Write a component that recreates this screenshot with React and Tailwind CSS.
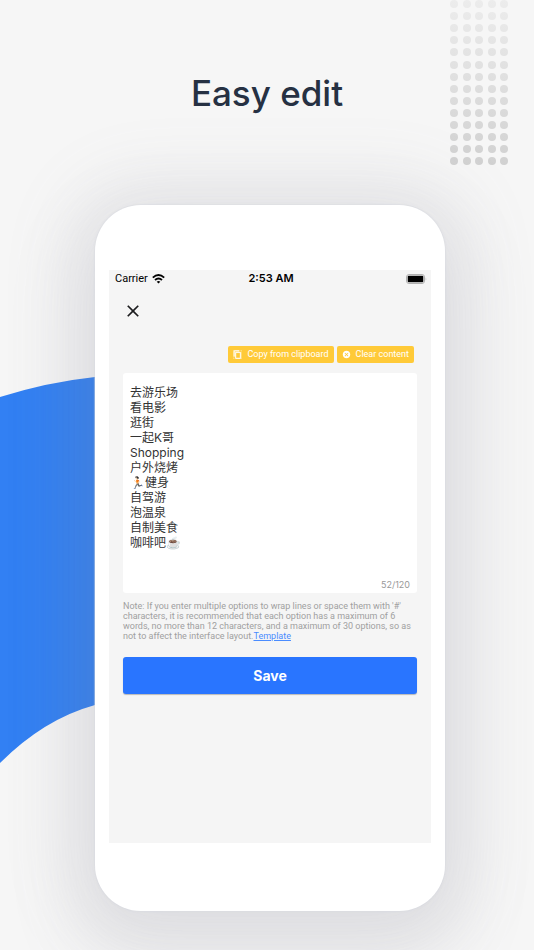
import { useState } from "react";
import { MdCancel, MdClose, MdContentCopy } from "react-icons/md";

const MAX_LENGTH = 120;

const initialOptions = [
  "去游乐场",
  "看电影",
  "逛街",
  "一起K哥",
  "Shopping",
  "户外烧烤",
  "🏃🏻健身",
  "自驾游",
  "泡温泉",
  "自制美食",
  "咖啡吧☕️",
].join("\n");

const dotColumns = [4, 17, 29, 42, 54];
const dotRows = [4, 16, 28, 40, 52, 65, 77, 89, 101, 113, 125, 137, 149, 161];

// counts an emoji with its modifiers as one character
const segmenter = new Intl.Segmenter();
const countCharacters = (text) => [...segmenter.segment(text)].length;

function DotGrid() {
  return (
    <svg className="absolute top-0 right-[26px] h-[166px] w-[58px]" viewBox="0 0 58 166" aria-hidden="true">
      <defs>
        <linearGradient id="dots" gradientUnits="userSpaceOnUse" x1="0" y1="0" x2="0" y2="166">
          <stop offset="0" stopColor="#ececec" />
          <stop offset="1" stopColor="#d1d1d1" />
        </linearGradient>
      </defs>
      <g fill="url(#dots)">
        {dotRows.map((y) =>
          dotColumns.map((x) => <circle key={`${x}-${y}`} cx={x} cy={y} r="4" />)
        )}
      </g>
    </svg>
  );
}

function BlueSwoosh() {
  return (
    <svg className="absolute top-[370px] left-0 h-[400px] w-[130px]" viewBox="0 0 130 400" aria-hidden="true">
      <path d="M0 27 Q48 12 95 7 L130 4 V328 L95 335 Q44 349 0 393 Z" fill="#3280f3" />
    </svg>
  );
}

function Wifi() {
  return (
    <svg className="h-[10px] w-[13px]" viewBox="0 0 13 10" fill="none" stroke="#000" strokeWidth="1.9" aria-hidden="true">
      <path d="M0.8 3.6 Q6.5 -1.4 12.2 3.6" />
      <path d="M3 6 Q6.5 3 10 6" />
      <path d="M4.7 7.7 Q6.5 6.2 8.3 7.7 L6.5 9.6 Z" fill="#000" stroke="none" />
    </svg>
  );
}

function Battery() {
  return (
    <svg className="h-[10px] w-[21px]" viewBox="0 0 21 10" aria-hidden="true">
      <rect x="0.5" y="0.5" width="18" height="9" rx="2.5" fill="none" stroke="#b0b0b0" />
      <rect x="1.7" y="1.7" width="15.6" height="6.6" rx="1" fill="#000" />
      <path d="M19.7 3.5 Q21 5 19.7 6.5 Z" fill="#b0b0b0" />
    </svg>
  );
}

function StatusBar() {
  return (
    <div className="grid grid-cols-3 items-center pt-[3px] pr-1 pl-[6px] text-[11px] leading-[11px] text-black">
      <div className="flex items-center gap-1">
        <span className="font-['Roboto',sans-serif]">Carrier</span>
        <Wifi />
      </div>
      <span className="text-center font-semibold">2:53 AM</span>
      <div className="flex justify-end">
        <Battery />
      </div>
    </div>
  );
}

export default function App() {
  const [options, setOptions] = useState(initialOptions);

  return (
    <main className="relative min-h-screen overflow-hidden bg-[#f6f6f6] pb-[39px] font-['Inter','Noto_Sans_CJK_SC',sans-serif]">
      <DotGrid />
      <BlueSwoosh />

      <h1 className="pt-[69px] text-center text-[35px] leading-[48px] font-medium text-[#263143]">
        Easy edit
      </h1>

      <div className="relative mt-[88px] mr-[89px] ml-[95px] rounded-[46px] bg-white px-[14px] pt-[65px] pb-[68px] shadow-[0_0_1px_1px_rgba(215,218,224,0.5),0_0_70px_25px_rgba(130,135,150,0.12),0_30px_70px_20px_rgba(130,135,150,0.12)]">
        <div className="min-h-[573px] bg-[#f5f5f5]">
          <StatusBar />

          <div className="px-[14px]">
            <button type="button" aria-label="Close" className="mt-[17px] block text-[#1c1c1e]">
              <MdClose className="size-5" />
            </button>

            <div className="mt-[25px] mr-[3px] flex justify-end gap-[3px] font-['Roboto',sans-serif] text-[9px] leading-[17px] text-white">
              <button type="button" className="flex items-center gap-[5px] rounded-xs bg-[#ffca38] px-[5px]">
                <MdContentCopy className="size-[9px]" stroke="currentColor" strokeWidth="1" />
                Copy from clipboard
              </button>
              <button
                type="button"
                onClick={() => setOptions("")}
                className="flex items-center gap-[5px] rounded-xs bg-[#ffca38] px-[5px]"
              >
                <MdCancel className="size-[9px]" />
                Clear content
              </button>
            </div>

            <div className="mt-[10px] rounded-[3px] bg-white px-[7px] pt-[12px] pb-px">
              <textarea
                aria-label="Options"
                maxLength={MAX_LENGTH}
                value={options}
                onChange={(e) => setOptions(e.target.value)}
                className="block h-[193px] w-full resize-none text-[12px] leading-[15px] text-[#333] outline-none"
              />
              <p className="text-right text-[9px] leading-[14px] text-[#999]">
                {countCharacters(options)}/{MAX_LENGTH}
              </p>
            </div>

            <p className="mt-2 font-['Roboto',sans-serif] text-[9px] leading-[10px] whitespace-nowrap text-[#a0a0a0]">
              Note: If you enter multiple options to wrap lines or space them with '#'
              <br />
              characters, it is recommended that each option has a maximum of 6
              <br />
              words, no more than 12 characters, and a maximum of 30 options, so as
              <br />
              not to affect the interface layout.
              <a href="#template" className="text-[#4a8cff] underline">
                Template
              </a>
            </p>

            <button
              type="button"
              className="mt-4 block h-[37px] w-full rounded-[3px] bg-[#2975ff] text-[14px] font-bold text-white shadow-[0_1px_1px_rgba(0,0,0,0.25)]"
            >
              Save
            </button>
          </div>
        </div>
      </div>
    </main>
  );
}
